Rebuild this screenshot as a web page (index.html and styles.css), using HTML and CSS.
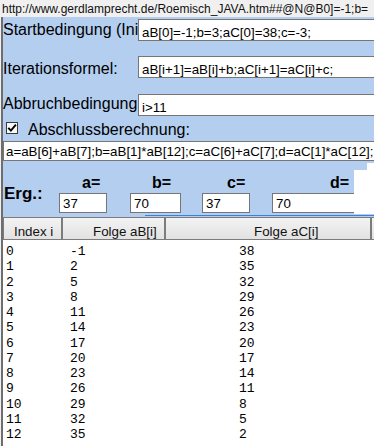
FILE: index.html
```html
<!DOCTYPE html>
<html lang="de">
<head>
<meta charset="utf-8">
<title>Roemisch JAVA</title>
<link rel="stylesheet" href="styles.css">
</head>
<body>
<div class="url">http://www.gerdlamprecht.de/Roemisch_JAVA.htm##@N@B0]=-1;b=</div>
<div class="main">
  <div class="form">
    <div class="row row1">
      <label class="lbl">Startbedingung (Initialisierung):</label>
      <input class="fld" type="text" value="aB[0]=-1;b=3;aC[0]=38;c=-3;">
    </div>
    <div class="row row2">
      <label class="lbl">Iterationsformel:</label>
      <input class="fld" type="text" value="aB[i+1]=aB[i]+b;aC[i+1]=aC[i]+c;">
    </div>
    <div class="row row3">
      <label class="lbl">Abbruchbedingung</label>
      <input class="fld" type="text" value="i&gt;11">
    </div>
    <div class="chkrow">
      <svg class="chk" width="12" height="12" viewBox="0 0 12 12"><rect x="0.5" y="0.5" width="11" height="11" fill="#f8f8f8" stroke="#3a3a3a"/><path d="M2.3 5.8 L4.9 8.6 L9.9 2.6" fill="none" stroke="#000" stroke-width="1.9"/></svg>
      <span class="chklbl">Abschlussberechnung:</span>
    </div>
    <input class="fld long" type="text" value="a=aB[6]+aB[7];b=aB[1]*aB[12];c=aC[6]+aC[7];d=aC[1]*aC[12];">
    <div class="erg">
      <div class="ergl">Erg.:</div>
      <div class="vl va">a=</div>
      <div class="vl vb">b=</div>
      <div class="vl vc">c=</div>
      <div class="vl vd">d=</div>
      <input class="out oa" type="text" value="37">
      <input class="out ob" type="text" value="70">
      <input class="out oc" type="text" value="37">
      <input class="out od" type="text" value="70">
    </div>
    <div class="blueline"></div>
  </div>
  <div class="list">
    <div class="hdr">
      <div class="hc h1">Index i</div>
      <div class="hc h2">Folge aB[i]</div>
      <div class="hc h3">Folge aC[i]</div>
      <div class="hc h4"></div>
    </div>
    <div class="rows">
      <span>0</span><span>-1</span><span>38</span>
      <span>1</span><span>2</span><span>35</span>
      <span>2</span><span>5</span><span>32</span>
      <span>3</span><span>8</span><span>29</span>
      <span>4</span><span>11</span><span>26</span>
      <span>5</span><span>14</span><span>23</span>
      <span>6</span><span>17</span><span>20</span>
      <span>7</span><span>20</span><span>17</span>
      <span>8</span><span>23</span><span>14</span>
      <span>9</span><span>26</span><span>11</span>
      <span>10</span><span>29</span><span>8</span>
      <span>11</span><span>32</span><span>5</span>
      <span>12</span><span>35</span><span>2</span>
    </div>
  </div>
</div>
<div class="ghost"></div>
</body>
</html>
```
FILE: styles.css
```css
* { box-sizing: border-box; }
html, body { margin: 0; padding: 0; overflow: hidden; }
body {
  width: 374px;
  height: 446px;
  background: #f0f0f0;
  font-family: "Liberation Sans", Arial, sans-serif;
  color: #000;
  position: relative;
}
.url {
  height: 17px;
  padding: 2px 0 0 2px;
  font-size: 12px;
  line-height: 14px;
  white-space: nowrap;
  overflow: hidden;
  background: #f0f0f0;
  color: #111;
}
.main {
  margin-left: 1px;
  border-left: 2px solid #6e6e6e;
  height: 429px;
  background: #fff;
}
.form {
  background: #b4cef0;
  padding-top: 2px;
  padding-bottom: 1px;
}
.row { display: flex; height: 22px; }
.row2 { margin-top: 15px; }
.row3 { margin-top: 16px; }
.lbl {
  width: 135px;
  flex: none;
  overflow: hidden;
  white-space: nowrap;
  font-size: 16px;
  line-height: 18px;
}
.row1 .lbl { padding-top: 2px; }
.row2 .lbl { padding-top: 4px; }
.row3 .lbl { padding-top: 1px; }
.fld {
  flex: none;
  width: 260px;
  height: 22px;
  margin: 0;
  border: 1px solid #767676;
  padding: 5px 2px 0 3px;
  font-family: "Liberation Sans", Arial, sans-serif;
  font-size: 13.33px;
  color: #000;
  background: #fff;
  outline: none;
}
.chkrow {
  display: flex;
  align-items: flex-start;
  height: 25px;
  padding-top: 5px;
}
.chk { flex: none; margin: 1px 10px 0 3px; }
.chklbl { font-size: 16px; line-height: 18px; white-space: nowrap; }
.fld.long {
  display: block;
  width: 400px;
  height: 20px;
  padding: 0 2px 0 2px;
}
.erg {
  display: grid;
  grid-template-columns: 56px 71px 72px 70px 1fr;
  grid-template-rows: 18px 20px;
  margin-top: 14px;
}
.ergl {
  grid-row: 1 / span 2;
  grid-column: 1;
  align-self: center;
  font-weight: bold;
  font-size: 17px;
  line-height: 20px;
  padding-left: 1px;
}
.vl {
  grid-row: 1;
  font-weight: bold;
  font-size: 16px;
  line-height: 16px;
  white-space: nowrap;
}
.va { grid-column: 2; padding-left: 23px; }
.vb { grid-column: 3; padding-left: 22px; }
.vc { grid-column: 4; padding-left: 25px; }
.vd { grid-column: 5; padding-left: 58px; }
.out {
  grid-row: 2;
  height: 20px;
  margin: 0;
  border: 1px solid #767676;
  padding: 0 2px 0 3px;
  font-family: "Liberation Sans", Arial, sans-serif;
  font-size: 13.33px;
  color: #000;
  background: #fff;
  outline: none;
}
.oa { grid-column: 2; width: 48px; }
.ob { grid-column: 3; width: 51px; }
.oc { grid-column: 4; width: 48px; }
.od { grid-column: 5; width: 130px; }
.blueline {
  height: 1px;
  margin: 2px 0 0 142px;
  background: #3b7fe0;
}
.hdr { display: flex; height: 23px; }
.hc {
  flex: none;
  height: 23px;
  border: 1px solid #7c7c7c;
  background: linear-gradient(#f3f3f3, #e2e2e2);
  font-size: 13.33px;
  line-height: 15px;
  padding-top: 6px;
  white-space: nowrap;
  color: #111;
}
.h1 { width: 59px; padding-left: 10px; }
.h2 { width: 103px; padding-left: 30px; }
.h3 { width: 206px; padding-left: 88px; }
.h4 { width: 20px; }
.rows {
  display: grid;
  grid-template-columns: 64px 169px 1fr;
  grid-auto-rows: 15.25px;
  padding: 4px 0 0 3px;
  font-family: "Liberation Mono", "Courier New", monospace;
  font-size: 13px;
  line-height: 15.25px;
  background: #fff;
  color: #000;
}
.ghost {
  position: absolute;
  left: 354px;
  top: 170px;
  width: 20px;
  height: 44px;
  background: #fff;
}
.ghost::before {
  content: "";
  position: absolute;
  left: 13px;
  top: -7px;
  width: 7px;
  height: 7px;
  background: #fff;
}
```
